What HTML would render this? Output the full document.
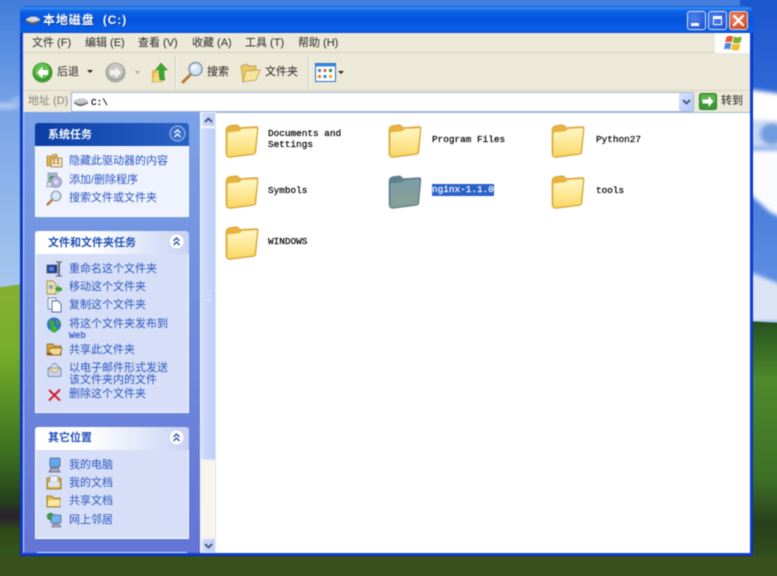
<!DOCTYPE html>
<html lang="zh"><head><meta charset="utf-8"><title>本地磁盘 (C:)</title>
<style>
html,body{margin:0;padding:0;width:777px;height:576px;overflow:hidden;background:#3a5a1a}
.a{position:absolute;white-space:nowrap}
body{font-family:"Liberation Sans","WenQuanYi Zen Hei","Noto Sans CJK SC",sans-serif;font-size:11px;color:#222}
#wrap{position:absolute;left:0;top:0;width:777px;height:576px;filter:blur(.5px)}
.m{color:#2a2a2a;font-size:11px;line-height:13px}
.l{color:#2a55c0;font-size:11px;line-height:13px;left:69px}
.h{font-weight:bold;font-size:11px;line-height:14px;color:#2150b8;left:48px}
.f{font-family:"Liberation Mono",monospace;font-size:9.4px;line-height:11px;color:#000;font-weight:normal;-webkit-text-stroke:.2px #000}
.sb{position:absolute;background:linear-gradient(90deg,#cfdcfb,#bccdf9);border:1px solid #eef2fd;border-radius:2px;box-sizing:border-box}
svg{position:absolute;overflow:visible}
</style></head><body>
<div id="wrap">
<svg width="777" height="576" style="left:0;top:0" viewBox="0 0 777 576">
<defs>
<linearGradient id="sky" x1="0" y1="0" x2="0" y2="1"><stop offset="0" stop-color="#3f7adb"/><stop offset=".35" stop-color="#79a5e6"/><stop offset="1" stop-color="#b2cff0"/></linearGradient>
<linearGradient id="skyR" x1="0" y1="0" x2="0" y2="1"><stop offset="0" stop-color="#1a55d0"/><stop offset="1" stop-color="#6a98e4"/></linearGradient>
<linearGradient id="gl" x1="0" y1="0" x2="0" y2="1"><stop offset="0" stop-color="#84b032"/><stop offset=".2" stop-color="#76ae2a"/><stop offset=".55" stop-color="#3d7020"/><stop offset=".72" stop-color="#25401c"/><stop offset=".77" stop-color="#2a2030"/><stop offset=".82" stop-color="#2f4a18"/><stop offset="1" stop-color="#3f6020"/></linearGradient>
<linearGradient id="gr" x1="0" y1="0" x2="0" y2="1"><stop offset="0" stop-color="#27521f"/><stop offset=".22" stop-color="#4f8a2c"/><stop offset=".6" stop-color="#3d7026"/><stop offset=".78" stop-color="#293f1c"/><stop offset="1" stop-color="#3a5a1e"/></linearGradient>
<filter id="cb" x="-50%" y="-50%" width="200%" height="200%"><feGaussianBlur stdDeviation="2"/></filter>
</defs>
<rect x="-6" y="-6" width="789" height="336" fill="url(#sky)"/>
<rect x="740" y="-6" width="43" height="336" fill="url(#skyR)"/>
<g filter="url(#cb)">
<ellipse cx="18" cy="100" rx="8" ry="2.500" fill="#a9c6f0" opacity=".7"/>
<ellipse cx="6" cy="106" rx="14" ry="3" fill="#c5d8f4" opacity=".8"/>
<path d="M745 89L790 95V125L745 125Z" fill="#fff"/>
<path d="M745 120H762L790 122V148H745Z" fill="#c8d8f2"/>
<ellipse cx="772" cy="134" rx="12" ry="11" fill="#6f9be0"/>
<path d="M745 150H790V222L770 212L745 190Z" fill="#fbfcff"/>
<path d="M745 270L790 288V322H745Z" fill="#dbe4f5"/>
</g>
<path d="M-6 288L30 283V400H-6Z" fill="#84b032"/>
<rect x="-6" y="295" width="36" height="287" fill="url(#gl)"/>
<path d="M745 321L783 323V340H745Z" fill="#27521f"/>
<rect x="750" y="323" width="33" height="259" fill="url(#gr)"/>
<rect x="-6" y="556" width="789" height="26" fill="#3a501c"/>
</svg>

<!-- window frame -->
<div class="a" style="left:20px;top:6px;width:733px;height:550px;background:#0f3fd4;border-radius:7px 7px 0 0;box-shadow:inset 0 0 0 1px #0a30b8"></div>
<div class="a" style="left:20px;top:6px;width:733px;height:27px;border-radius:7px 7px 0 0;background:linear-gradient(180deg,#0a5cd8 0,#3a8cf6 2px,#0e62e4 5px,#0553dc 14px,#0a60ea 22px,#0a5ce0 26px,#0645c8 100%)"></div>
<!-- title icon -->
<svg style="left:25px;top:14px" width="16" height="12" viewBox="0 0 16 12"><path d="M1 5L6 2.500H11L15 5V7.500L9 10H6L1 7.500Z" fill="#b4b8bc"/><path d="M1 5L6 7H9L15 5L10 3H6Z" fill="#d8dade"/><path d="M1 6.500L6 8.500H9L15 6.500V8L9 10.500H6L1 8Z" fill="#54585e"/></svg>
<div class="a" style="left:43px;top:13px;color:#fff;font-weight:bold;font-size:12px;line-height:15px;letter-spacing:.9px;word-spacing:4px;text-shadow:1px 1px 0 #0a3aa0">本地磁盘 (C:)</div>
<!-- caption buttons -->
<div class="a" style="left:687px;top:11px;width:19px;height:19px;box-sizing:border-box;border:1px solid #dfe8fb;border-radius:3px;background:radial-gradient(circle at 35% 35%,#4c82ec,#2a5ed8 70%,#1d47b8)"></div>
<div class="a" style="left:691px;top:23px;width:8px;height:3px;background:#fff"></div>
<div class="a" style="left:708px;top:11px;width:19px;height:19px;box-sizing:border-box;border:1px solid #dfe8fb;border-radius:3px;background:radial-gradient(circle at 35% 35%,#4c82ec,#2a5ed8 70%,#1d47b8)"></div>
<div class="a" style="left:713px;top:16px;width:9px;height:9px;box-sizing:border-box;border:1px solid #fff;border-top-width:3px"></div>
<div class="a" style="left:729px;top:11px;width:19px;height:19px;box-sizing:border-box;border:1px solid #efe0dc;border-radius:3px;background:radial-gradient(circle at 35% 35%,#ea8a6a,#d84f2e 70%,#b83a1a)"></div>
<svg style="left:729px;top:11px" width="19" height="19" viewBox="0 0 19 19"><path d="M5 5L14 14M14 5L5 14" stroke="#fff" stroke-width="2.200" stroke-linecap="square"/></svg>

<!-- inner client -->
<div class="a" style="left:23px;top:33px;width:727px;height:520px;background:#fff"></div>
<!-- menu bar -->
<div class="a" style="left:23px;top:33px;width:727px;height:20px;background:#ece9d8;border-bottom:1px solid #d8d4c2;box-sizing:border-box"></div>
<div class="a m" style="left:32px;top:37px">文件 (F)</div>
<div class="a m" style="left:85px;top:37px">编辑 (E)</div>
<div class="a m" style="left:138px;top:37px">查看 (V)</div>
<div class="a m" style="left:192px;top:37px">收藏 (A)</div>
<div class="a m" style="left:245px;top:37px">工具 (T)</div>
<div class="a m" style="left:298px;top:37px">帮助 (H)</div>
<div class="a" style="left:715px;top:33px;width:35px;height:21px;background:#fff"></div>
<svg style="left:724px;top:34px" width="19" height="18" viewBox="0 0 19 18"><path d="M2.500 3Q6 1 9 2.500L7.500 8.500Q4.500 7 1 8.500Z" fill="#e8562a"/><path d="M10 2.500Q13.500 4 18 2.500L16.500 8.500Q12.500 10 8.700 8.500Z" fill="#7eb02e"/><path d="M1 9.500Q4 8.200 7.300 9.500L6 15.500Q3 14 0 15.500Z" fill="#4e86d8"/><path d="M8.400 9.600Q12 11 16.300 9.600L15 16Q11 17 7 15.600Z" fill="#f0bc2a"/></svg>
<!-- toolbar -->
<div class="a" style="left:23px;top:53px;width:727px;height:38px;background:#ece9d8;border-bottom:1px solid #d8d4c2;box-sizing:border-box"></div>
<svg style="left:32px;top:62px" width="21" height="21" viewBox="0 0 21 21"><circle cx="10.500" cy="10.500" r="10" fill="#3c9a32"/><circle cx="10" cy="9" r="7.500" fill="#62c24c"/><path d="M10.500 4.500L5 10.500L10.500 16.500V13H16V8H10.500Z" fill="#fff"/></svg>
<div class="a m" style="left:57px;top:66px;font-size:11px">后退</div>
<svg style="left:87px;top:70px" width="6" height="4"><path d="M0 0H6L3 3Z" fill="#222"/></svg>
<svg style="left:105px;top:62px" width="21" height="21" viewBox="0 0 21 21"><circle cx="10.500" cy="10.500" r="10" fill="#a8a8a4"/><circle cx="10.500" cy="9" r="7.500" fill="#c8c8c2"/><path d="M10.500 4.500L16 10.500L10.500 16.500V13H5V8H10.500Z" fill="#f2f2f0"/></svg>
<svg style="left:135px;top:71px" width="5" height="3"><path d="M0 0H5L2.500 3Z" fill="#a8a8a0"/></svg>
<svg style="left:151px;top:62px" width="18" height="21" viewBox="0 0 18 21"><path d="M1 8H5L6 6.500V20H1Z" fill="#e9bb4c"/><path d="M1 20L3 10H13L11 20Z" fill="#f4d77a" stroke="#c2952e" stroke-width=".6"/><path d="M10 1L4.500 8H8Q8 13 9 18H14Q12.500 13 13 8H16.500Z" fill="#3ea62e" stroke="#2a7c22" stroke-width=".5"/></svg>
<div class="a" style="left:175px;top:57px;width:1px;height:32px;background:#cfccbc;box-shadow:1px 0 0 #f8f7f0"></div>
<svg style="left:181px;top:61px" width="23" height="23" viewBox="0 0 23 23"><path d="M2 21L10 13" stroke="#b87a3a" stroke-width="3" stroke-linecap="round"/><circle cx="14.500" cy="8" r="6.500" fill="#d2e6f6" stroke="#8296aa" stroke-width="1.500"/><circle cx="13" cy="6.500" r="2.500" fill="#f6fbff"/></svg>
<div class="a m" style="left:207px;top:66px;color:#222">搜索</div>
<svg style="left:240px;top:62px" width="21" height="21" viewBox="0 0 21 21"><path d="M1 4L7 2L9 4L16 4V16L3 20Z" fill="#e8c66e" stroke="#b89640" stroke-width=".7"/><path d="M3 20L6 9L20 8L16 18Z" fill="#f8e39c" stroke="#b89640" stroke-width=".7"/></svg>
<div class="a m" style="left:265px;top:66px;color:#222">文件夹</div>
<div class="a" style="left:308px;top:57px;width:1px;height:32px;background:#cfccbc;box-shadow:1px 0 0 #f8f7f0"></div>
<svg style="left:315px;top:63px" width="21" height="19" viewBox="0 0 21 19"><rect x=".5" y=".5" width="20" height="18" fill="#fff" stroke="#2a6ec8"/><rect x="1" y="1" width="19" height="2.500" fill="#3a86dc"/><g><rect x="3" y="6" width="3" height="3" fill="#6a7fb8"/><rect x="8.500" y="6" width="3" height="3" fill="#e26a3a"/><rect x="14" y="6" width="3" height="3" fill="#3b8a3a"/><rect x="3" y="12" width="3" height="3" fill="#e68232"/><rect x="8.500" y="12" width="3" height="3" fill="#3a86dc"/><rect x="14" y="12" width="3" height="3" fill="#d8b02a"/></g></svg>
<svg style="left:338px;top:71px" width="6" height="4"><path d="M0 0H6L3 3Z" fill="#222"/></svg>
<!-- address -->
<div class="a" style="left:23px;top:91px;width:727px;height:21px;background:#ece9d8"></div>
<div class="a m" style="left:28px;top:95px;color:#85857c">地址 (D)</div>
<div class="a" style="left:71px;top:92px;width:623px;height:20px;background:#fff;border:1px solid #9fb6d8;box-sizing:border-box"></div>
<svg style="left:73px;top:97px" width="16" height="10" viewBox="0 0 16 10"><path d="M1 4L6 1.500H11L15 4V6L9 8.500H6L1 6Z" fill="#b4b8bc"/><path d="M1 4L6 6H9L15 4L10 2H6Z" fill="#c8cacc"/><path d="M1 5.500L6 7.500H9L15 5.500V6.500L9 9H6L1 6.500Z" fill="#54585e"/></svg>
<div class="a f" style="left:91px;top:97px">C:\</div>
<div class="a" style="left:679px;top:93px;width:14px;height:18px;background:linear-gradient(135deg,#d8e2fb,#b4c8f6);border-radius:2px"></div>
<svg style="left:682px;top:99px" width="9" height="6" viewBox="0 0 9 6"><path d="M1 1L4.500 4.500L8 1" fill="none" stroke="#4a5a80" stroke-width="2"/></svg>
<svg style="left:699px;top:93px" width="18" height="17" viewBox="0 0 18 17"><rect x=".5" y=".5" width="17" height="16" rx="2" fill="#3c9a36" stroke="#2b7a2a"/><rect x="1.500" y="1.500" width="15" height="7" fill="#5ab548"/><path d="M9.500 3L14.500 8.500L9.500 14V10.500H3.500V6.500H9.500Z" fill="#fff"/></svg>
<div class="a m" style="left:721px;top:95px;color:#222">转到</div>

<!-- left pane -->
<div class="a" style="left:23px;top:112px;width:177px;height:441px;background:linear-gradient(180deg,#7ba2e7 0,#6375d6 100%)"></div>
<!-- scrollbar -->
<div class="a" style="left:200px;top:112px;width:16px;height:441px;background:#f6f4ec;border-right:1px solid #e4e2d8;box-sizing:border-box"></div>
<div class="sb" style="left:201px;top:112px;width:15px;height:15px"></div>
<svg style="left:204px;top:117px" width="9" height="6" viewBox="0 0 9 6"><path d="M1 5L4.500 1.500L8 5" fill="none" stroke="#4a5a80" stroke-width="2"/></svg>
<div class="sb" style="left:201px;top:128px;width:15px;height:332px;border-color:#d8e2fb"></div>
<div class="a" style="left:205px;top:291px;width:7px;height:9px;background:repeating-linear-gradient(180deg,#eef2fd 0,#eef2fd 1px,#a8bcec 1px,#a8bcec 2px)"></div>
<div class="sb" style="left:201px;top:538px;width:15px;height:15px"></div>
<svg style="left:204px;top:543px" width="9" height="6" viewBox="0 0 9 6"><path d="M1 1L4.500 4.500L8 1" fill="none" stroke="#4a5a80" stroke-width="2"/></svg>
<!-- content top line -->
<div class="a" style="left:216px;top:112px;width:534px;height:1px;background:#9fb6d8"></div>

<!-- box 1 -->
<div class="a" style="left:35px;top:123px;width:154px;height:23px;border-radius:3px 3px 0 0;background:linear-gradient(90deg,#0a3ea6,#2b62c6)"></div>
<div class="a h" style="top:128px;color:#fff">系统任务</div>
<svg style="left:169px;top:125px" width="17" height="17" viewBox="0 0 17 17"><circle cx="8.500" cy="8.500" r="7.500" fill="#3a6ecc" stroke="#a8c4f2"/><path d="M5.500 8L8.500 5L11.500 8M5.500 12L8.500 9L11.500 12" fill="none" stroke="#fff" stroke-width="1.400"/></svg>
<div class="a" style="left:35px;top:146px;width:154px;height:71px;background:#eff3ff;border:1px solid #fff;border-top:0;box-sizing:border-box"></div>
<div class="a l" style="top:155px">隐藏此驱动器的内容</div>
<div class="a l" style="top:174px">添加/删除程序</div>
<div class="a l" style="top:192px">搜索文件或文件夹</div>
<svg style="left:46px;top:153px" width="17" height="15" viewBox="0 0 17 15"><path d="M1 3H6L7 1.500H11V13H1Z" fill="#e0b64a" stroke="#8a6a1a" stroke-width=".6"/><rect x="5" y="5" width="11" height="9" fill="#f0e4b8" stroke="#6a5a2a" stroke-width=".6"/><path d="M7 7H9M11 7H13M7 10H9M11 10H13" stroke="#c84a2a" stroke-width="1.500"/></svg>
<svg style="left:46px;top:172px" width="17" height="16" viewBox="0 0 17 16"><rect x="2" y="1" width="9" height="8" fill="#a8bcd4" stroke="#6a7a90" stroke-width=".6"/><circle cx="6" cy="6" r="2.500" fill="#4aa04a"/><circle cx="10" cy="10" r="5.500" fill="#b8b4e0" stroke="#7470b0" stroke-width=".6"/><circle cx="10" cy="10" r="1.500" fill="#fff"/><rect x="1" y="10" width="5" height="5" fill="#d4d8e0" stroke="#70788a" stroke-width=".5"/></svg>
<svg style="left:46px;top:190px" width="16" height="16" viewBox="0 0 16 16"><path d="M1.500 14.500L6.500 9.500" stroke="#b87a3a" stroke-width="2.400" stroke-linecap="round"/><circle cx="10" cy="6" r="4.800" fill="#d8e8f8" stroke="#8a98aa" stroke-width="1.200"/></svg>

<!-- box 2 -->
<div class="a" style="left:35px;top:231px;width:154px;height:23px;border-radius:3px 3px 0 0;background:linear-gradient(90deg,#fff 35%,#c8d2f4)"></div>
<div class="a h" style="top:236px">文件和文件夹任务</div>
<svg style="left:168px;top:233px" width="17" height="17" viewBox="0 0 17 17"><circle cx="8.500" cy="8.500" r="7.500" fill="#fff" stroke="#c8d2f0"/><path d="M5.500 8L8.500 5L11.500 8M5.500 12L8.500 9L11.500 12" fill="none" stroke="#2150b8" stroke-width="1.400"/></svg>
<div class="a" style="left:35px;top:254px;width:154px;height:159px;background:#d6dff7;border:1px solid #fff;border-top:0;box-sizing:border-box"></div>
<div class="a l" style="top:263px">重命名这个文件夹</div>
<div class="a l" style="top:281px">移动这个文件夹</div>
<div class="a l" style="top:299px">复制这个文件夹</div>
<div class="a l" style="top:318px">将这个文件夹发布到</div>
<div class="a f" style="left:69px;top:330px;color:#2a55c0;-webkit-text-stroke:.2px #2a55c0">Web</div>
<div class="a l" style="top:344px">共享此文件夹</div>
<div class="a l" style="top:362px;line-height:12px;white-space:normal;width:110px">以电子邮件形式发送<br>该文件夹内的文件</div>
<div class="a l" style="top:388px">删除这个文件夹</div>
<svg style="left:46px;top:261px" width="17" height="16" viewBox="0 0 17 16"><rect x="1" y="4" width="10" height="8" fill="#1f3f9e" stroke="#555" stroke-width=".7"/><rect x="3" y="6" width="5" height="4" fill="#5e7edc"/><rect x="12" y="1" width="2" height="14" fill="#6a6e78"/><path d="M10 1H16M10 15H16" stroke="#6a6e78" stroke-width="1.200"/></svg>
<svg style="left:46px;top:279px" width="17" height="16" viewBox="0 0 17 16"><path d="M1 2H7L10 5V15H1Z" fill="#efe0a0" stroke="#8a7a30" stroke-width=".7"/><path d="M8 7L12 3V5.500H15V9H12V11Z" fill="#3ea22e" transform="translate(1 3)"/><rect x="3" y="6" width="4" height="4" fill="#7ea8e0"/></svg>
<svg style="left:47px;top:297px" width="15" height="16" viewBox="0 0 15 16"><rect x="1" y="1" width="8" height="11" fill="#f2f5fa" stroke="#6a7a98" stroke-width=".8"/><path d="M5 4H11L14 7V15H5Z" fill="#fff" stroke="#4a6aa0" stroke-width=".9"/></svg>
<svg style="left:46px;top:317px" width="16" height="16" viewBox="0 0 16 16"><circle cx="8" cy="7.500" r="7" fill="#2f72c8"/><path d="M3 4Q6 2 8 5T4 10ZM10 2Q14 5 13 9L10 6Z" fill="#46a83a"/><path d="M8 8L12.500 12.500H10V15.500H6V12.500H3.500Z" fill="#3eb82e"/></svg>
<svg style="left:46px;top:342px" width="17" height="15" viewBox="0 0 17 15"><path d="M1 2H7L8 4H15V13H1Z" fill="#d8a83e" stroke="#7a5a1a" stroke-width=".7"/><path d="M2 13L4 6H16L14 13Z" fill="#f2d88a" stroke="#7a5a1a" stroke-width=".7"/><path d="M1 11Q5 9 7 13H2Z" fill="#8a5a2a"/></svg>
<svg style="left:47px;top:362px" width="15" height="16" viewBox="0 0 15 16"><path d="M2 6L7.500 1L13 6V14H2Z" fill="#d8def0" stroke="#7a86a8" stroke-width=".8"/><rect x="1" y="6" width="13" height="8.500" rx="1" fill="#c8d4ec" stroke="#6a7ca4" stroke-width=".8"/><path d="M1.500 6.500L7.500 11L13.500 6.500" fill="#f2dfae" stroke="#a88a4a" stroke-width=".6"/></svg>
<svg style="left:47px;top:388px" width="15" height="14" viewBox="0 0 15 14"><path d="M2 2L13 12.500M13 1.500L2 12.500" stroke="#d21f2e" stroke-width="2"/></svg>

<!-- box 3 -->
<div class="a" style="left:35px;top:427px;width:154px;height:23px;border-radius:3px 3px 0 0;background:linear-gradient(90deg,#fff 35%,#c8d2f4)"></div>
<div class="a h" style="top:431px">其它位置</div>
<svg style="left:168px;top:429px" width="17" height="17" viewBox="0 0 17 17"><circle cx="8.500" cy="8.500" r="7.500" fill="#fff" stroke="#c8d2f0"/><path d="M5.500 8L8.500 5L11.500 8M5.500 12L8.500 9L11.500 12" fill="none" stroke="#2150b8" stroke-width="1.400"/></svg>
<div class="a" style="left:35px;top:450px;width:154px;height:89px;background:#d6dff7;border:1px solid #fff;border-top:0;box-sizing:border-box"></div>
<div class="a l" style="top:459px">我的电脑</div>
<div class="a l" style="top:477px">我的文档</div>
<div class="a l" style="top:495px">共享文档</div>
<div class="a l" style="top:514px">网上邻居</div>
<svg style="left:48px;top:457px" width="13" height="16" viewBox="0 0 13 16"><rect x="2" y="1" width="10" height="9" rx="1" fill="#5ea8ec" stroke="#555f80" stroke-width=".8"/><path d="M3 11H10L12 15H1Z" fill="#a8a4c0" stroke="#5a5878" stroke-width=".7"/></svg>
<svg style="left:46px;top:475px" width="16" height="15" viewBox="0 0 16 15"><path d="M1 3H14Q15 3 15 4V14H1Z" fill="#e0ad3a" stroke="#8a6a1a" stroke-width=".8"/><path d="M4 1H12V7H4Z" fill="#eef2fa" stroke="#6a7a9a" stroke-width=".6"/><rect x="2.500" y="7" width="11" height="5" fill="#dce4f2"/></svg>
<svg style="left:46px;top:494px" width="16" height="14" viewBox="0 0 16 14"><path d="M1 2H6L7.500 4H14V13H1Z" fill="#e4b648" stroke="#8a6a1a" stroke-width=".8"/><path d="M2 6H14V12H2Z" fill="#f8e8a4"/></svg>
<svg style="left:46px;top:512px" width="17" height="16" viewBox="0 0 17 16"><circle cx="4.500" cy="4.500" r="3.800" fill="#3e9a3a"/><rect x="5" y="3" width="10" height="8" rx="1" fill="#6eb4ee" stroke="#5a6488" stroke-width=".8"/><path d="M7 12H13L15 15H6Z" fill="#a8a4c0" stroke="#5a5878" stroke-width=".6"/></svg>
<!-- box 4 peek -->
<div class="a" style="left:37px;top:552px;width:150px;height:1px;background:#e4eafa"></div>
<!-- light pane edge -->
<div class="a" style="left:23px;top:112px;width:1px;height:441px;background:#c8d6f4"></div>

<!-- folders -->
<svg width="0" height="0" style="left:0;top:0"><defs>
<linearGradient id="fb" x1="0" y1="0" x2="0" y2="1"><stop offset="0" stop-color="#fff6c4"/><stop offset=".6" stop-color="#fde68e"/><stop offset="1" stop-color="#fbd865"/></linearGradient>
<symbol id="fo" viewBox="0 0 34 34"><path d="M1 6Q1 2.500 5 1.500L11 .8Q13 .8 15 3.500L31 2.500Q33.500 2.500 33 5L30.800 28.500Q30.500 30 28 30.400L5 33.500Q1.500 33.500 1 30Z" fill="#e8b23c" stroke="#c8962c" stroke-width=".6"/><path d="M2.500 9.500Q2.500 8.300 4 8.200L14 7.300Q15.500 7 16.500 5L31 4.300Q32.200 4.300 32 5.600L29.500 28Q29.300 29.200 28 29.400L4.500 32.200Q2.500 32.400 2.500 30.500Z" fill="url(#fb)"/></symbol>
<linearGradient id="fg" x1="0" y1="0" x2="0" y2="1"><stop offset="0" stop-color="#7c9ca8"/><stop offset="1" stop-color="#87a292"/></linearGradient>
</defs></svg>
<svg style="left:225px;top:124px" width="34" height="34"><use href="#fo"/></svg>
<svg style="left:388px;top:124px" width="34" height="34"><use href="#fo"/></svg>
<svg style="left:551px;top:124px" width="34" height="34"><use href="#fo"/></svg>
<svg style="left:225px;top:175px" width="34" height="34"><use href="#fo"/></svg>
<svg style="left:388px;top:175px" width="34" height="34" viewBox="0 0 34 34"><path d="M1 6Q1 2.500 5 1.500L11 .8Q13 .8 15 3.500L31 2.500Q33.500 2.500 33 5L30.800 28.500Q30.500 30 28 30.400L5 33.500Q1.500 33.500 1 30Z" fill="#5f8090" stroke="#6a8a9c" stroke-width=".6"/><path d="M2.500 9.500Q2.500 8.300 4 8.200L14 7.300Q15.500 7 16.500 5L31 4.300Q32.200 4.300 32 5.600L29.500 28Q29.300 29.200 28 29.400L4.500 32.200Q2.500 32.400 2.500 30.500Z" fill="url(#fg)"/></svg>
<svg style="left:551px;top:175px" width="34" height="34"><use href="#fo"/></svg>
<svg style="left:225px;top:226px" width="34" height="34"><use href="#fo"/></svg>

<div class="a f" style="left:268px;top:128px">Documents and<br>Settings</div>
<div class="a f" style="left:432px;top:134px">Program Files</div>
<div class="a f" style="left:596px;top:134px">Python27</div>
<div class="a f" style="left:268px;top:185px">Symbols</div>
<div class="a f" style="left:432px;top:184px;background:#2a62c8;color:#fff;-webkit-text-stroke:.2px #fff;height:12px;width:62px">nginx-1.1.0</div>
<div class="a f" style="left:596px;top:185px">tools</div>
<div class="a f" style="left:268px;top:236px">WINDOWS</div>
</div>
</body></html>
